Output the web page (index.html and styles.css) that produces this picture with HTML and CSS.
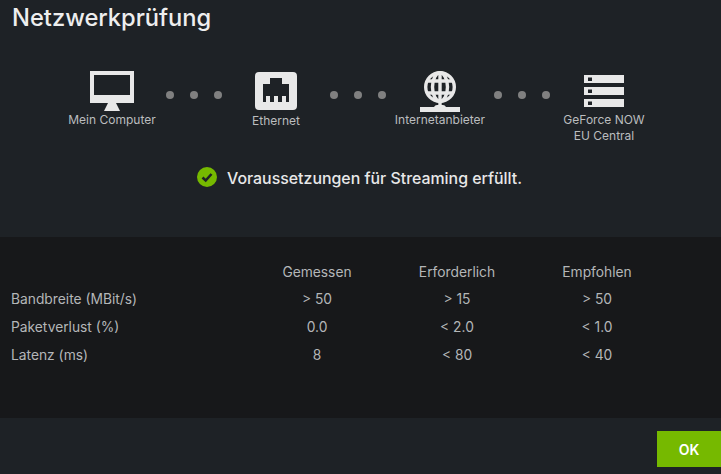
FILE: index.html
```html
<!DOCTYPE html>
<html lang="de">
<head>
<meta charset="utf-8">
<title>Netzwerkprüfung</title>
<link rel="stylesheet" href="styles.css">
</head>
<body>
<main class="dialog">
  <section class="top">
    <h1 class="title">Netzwerkprüfung</h1>
    <div class="chain">
      <div class="node">
        <div class="icon">
          <svg width="44" height="40" viewBox="0 0 44 40"><path fill="#e8e8e8" fill-rule="evenodd" d="M0 0H44V32H0ZM4 4V24H40V4Z"/><path fill="#e8e8e8" d="M18 32H26L30 40H14Z"/></svg>
        </div>
        <div class="label">Mein Computer</div>
      </div>
      <div class="dots"><i class="dot"></i><i class="dot"></i><i class="dot"></i></div>
      <div class="node">
        <div class="icon">
          <svg width="42" height="40" viewBox="0 0 42 40"><path fill="#e8e8e8" fill-rule="evenodd" d="M4 1H38Q42 1 42 5V35Q42 39 38 39H4Q0 39 0 35V5Q0 1 4 1ZM15 7V13H8V31H34V13H27V7Z"/><path fill="#e8e8e8" d="M11 25H15V31H11ZM19 25H23V31H19ZM27 25H31V31H27Z"/></svg>
        </div>
        <div class="label label-low">Ethernet</div>
      </div>
      <div class="dots"><i class="dot"></i><i class="dot"></i><i class="dot"></i></div>
      <div class="node">
        <div class="icon">
          <svg width="40" height="41" viewBox="0 0 40 41"><g fill="none" stroke="#e8e8e8" stroke-width="3.400"><circle cx="20" cy="16" r="14.300"/><ellipse cx="20" cy="16" rx="7.500" ry="14.300"/><path d="M7 10H33M7 22H33M20 2V36"/></g><path fill="#e8e8e8" d="M0 36H14Q15 34 17 34H23Q25 34 26 36H40V41H0Z"/></svg>
        </div>
        <div class="label">Internetanbieter</div>
      </div>
      <div class="dots"><i class="dot"></i><i class="dot"></i><i class="dot"></i></div>
      <div class="node">
        <div class="icon">
          <svg width="40" height="40" viewBox="0 0 40 40"><path fill="#e8e8e8" fill-rule="evenodd" d="M0 4H40V12H0ZM4 6.500V10H8V6.500ZM0 16H40V24H0ZM4 18.500V22H8V18.500ZM0 28H40V36H0ZM4 30.500V34H8V30.500Z"/></svg>
        </div>
        <div class="label">GeForce NOW<br>EU Central</div>
      </div>
    </div>
    <div class="status">
      <svg width="20" height="20" viewBox="0 0 20 20"><circle cx="10" cy="10" r="10" fill="#76b900"/><path fill="none" stroke="#1e2226" stroke-width="2.600" d="M5.500 10.500L8.700 13.500L14.500 7"/></svg>
      <span class="status-text">Voraussetzungen für Streaming erfüllt.</span>
    </div>
  </section>
  <section class="band">
    <div class="metrics">
      <div></div><div class="cell head">Gemessen</div><div class="cell head">Erforderlich</div><div class="cell head">Empfohlen</div>
      <div>Bandbreite (MBit/s)</div><div class="cell">&gt; 50</div><div class="cell">&gt; 15</div><div class="cell">&gt; 50</div>
      <div>Paketverlust (%)</div><div class="cell">0.0</div><div class="cell">&lt; 2.0</div><div class="cell">&lt; 1.0</div>
      <div>Latenz (ms)</div><div class="cell">8</div><div class="cell">&lt; 80</div><div class="cell">&lt; 40</div>
    </div>
  </section>
  <footer class="foot"><button class="ok">OK</button></footer>
</main>
</body>
</html>
```
FILE: styles.css
```css
* { box-sizing: border-box; }
html, body { margin: 0; padding: 0; height: 100%; }
body { background: #1e2226; font-family: Inter, "Noto Sans", sans-serif; overflow: hidden; }
.dialog { width: 721px; height: 474px; display: flex; flex-direction: column; }
.top { height: 237px; padding: 4px 0 0 12px; }
.title { margin: 0; font-size: 23.700px; line-height: 28px; font-weight: 500; color: #eeeeee; }
.chain { display: flex; align-items: flex-start; margin: 39px 0 0 54px; }
.node { width: 92px; display: flex; flex-direction: column; align-items: center; }
.icon { height: 40px; display: flex; justify-content: center; }
.label { margin-top: 1px; font-size: 12px; line-height: 16px; color: #bbbdbf; text-align: center; white-space: nowrap; }
.label-low { margin-top: 2px; }
.dots { width: 72px; height: 48px; display: flex; justify-content: center; align-items: center; gap: 16px; }
.dot { width: 8px; height: 8px; border-radius: 50%; background: #808080; }
.status { display: flex; align-items: center; gap: 10px; margin: 23px 0 0 185px; height: 20px; font-size: 15.900px; font-weight: 500; color: #e8e8e8; white-space: nowrap; }
.status-text { padding-top: 2px; }
.band { height: 181px; background: #17181a; padding: 20px 0 0 11px; }
.metrics { display: grid; grid-template-columns: 236px 140px 140px 140px; grid-auto-rows: 28px; align-items: center; font-size: 13.800px; color: #b4b6b8; }
.cell { text-align: center; }
.head { padding-top: 2px; }
.foot { flex: 1; display: flex; justify-content: flex-end; padding-top: 13px; }
.ok { width: 64px; height: 36px; border: 0; padding: 0; background: #76b900; color: #ffffff; font: 600 14px Inter, "Noto Sans", sans-serif; }
```
